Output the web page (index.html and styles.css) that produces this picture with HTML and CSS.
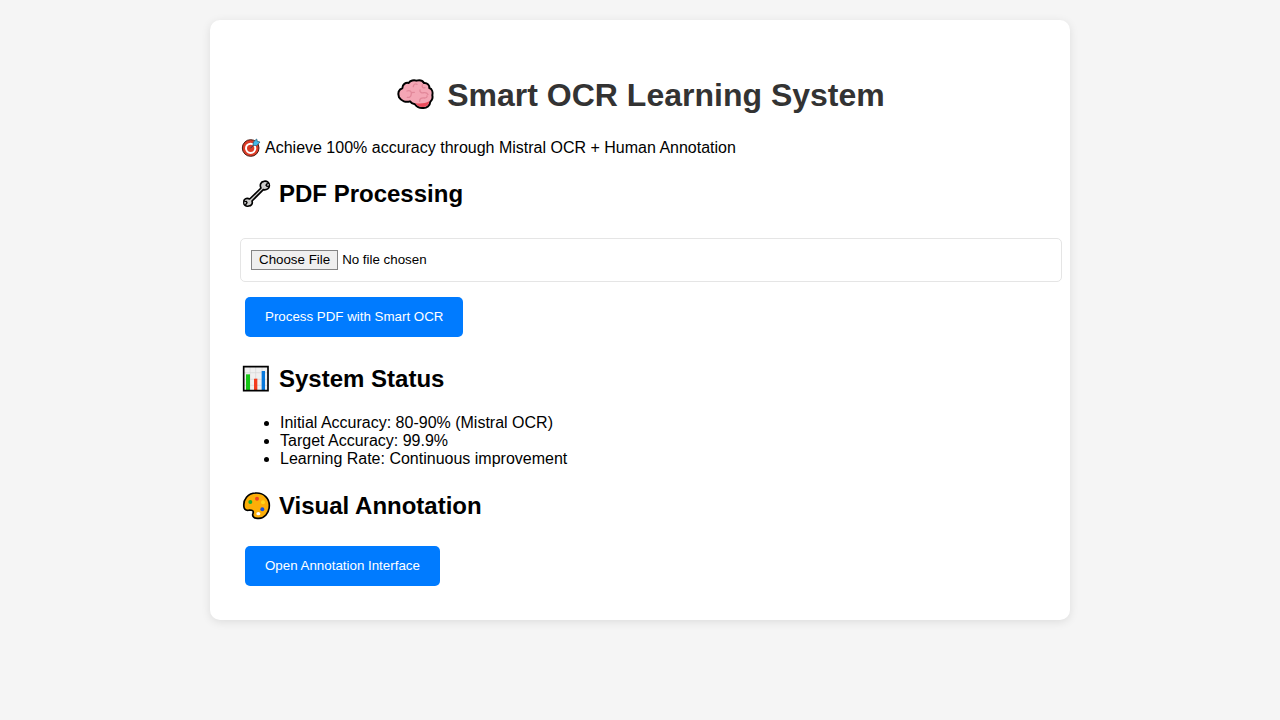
FILE: index.html
```html
<!DOCTYPE html>
<html lang="en">
<head>
<meta charset="utf-8">
<meta name="viewport" content="width=device-width, initial-scale=1">
<title>Smart OCR Learning System</title>
<link rel="stylesheet" href="styles.css">
</head>
<body class="page">
<main class="container">
  <h1 class="title">
    <svg class="icon-title" viewBox="18 21 126 108" aria-hidden="true">
      <path d="M30 82C25 70 29 58 40 55C40 43 50 37 59 39C64 31 75 29 82 32C92 29 101 32 105 39C115 38 122 46 121 54C130 57 132 68 130 76C132 84 129 91 124 95C123 107 113 115 102 114C91 115 84 111 78 103C70 102 66 98 63 94C51 98 37 94 30 82Z" fill="#f4a6b5" stroke="#000" stroke-width="6" stroke-linejoin="round"/>
      <path d="M79 99C94 103 108 100 121 94C120 105 110 112 101 111C91 111 84 107 79 99Z" fill="#ea4c5c"/>
      <path d="M54 63C64 59 70 66 66 76C65 81 60 83 55 82M67 68L76 67M73 50C73 43 79 40 84 43M100 44C98 52 103 55 108 53M93 60C91 66 98 70 105 68C111 67 115 70 117 74M92 94C91 86 98 82 107 84C112 84 115 81 114 78" fill="none" stroke="#e2889a" stroke-width="4" stroke-linecap="round"/>
    </svg>
    <span>Smart OCR Learning System</span>
  </h1>
  <p class="intro">
    <svg class="icon-text" viewBox="12 14 63 60" aria-hidden="true">
      <circle cx="44" cy="44" r="25" fill="#dc3c26" stroke="#4a1d16" stroke-width="3"/>
      <circle cx="44" cy="45" r="14" fill="#dc3c26" stroke="#fff" stroke-width="6"/>
      <path d="M43 45L57 31" stroke="#173f54" stroke-width="3"/>
      <path d="M51 36L52 26L62 17L64 24L72 26L62 37Z" fill="#42b8e8" stroke="#19516c" stroke-width="2"/>
    </svg>
    <span>Achieve 100% accuracy through Mistral OCR + Human Annotation</span>
  </p>

  <section>
    <h2 class="heading">
      <svg class="icon-heading" viewBox="12 12 96 96" aria-hidden="true">
        <path d="M75 42C70 32 75 23 84 22C92 19 100 26 100 34C101 43 92 49 82 47L48 81C51 89 46 96 38 96C30 99 22 92 24 84C22 76 31 70 41 75Z" fill="#d0cfce" stroke="#000" stroke-width="5" stroke-linejoin="round"/>
        <path d="M99 29L92 30L90 34L93 37L99 36M25 83L31 82L33 86L31 90L26 91" fill="#fff" stroke="#000" stroke-width="4" stroke-linejoin="round"/>
      </svg>
      <span>PDF Processing</span>
    </h2>
    <input class="file-input" type="file" accept=".pdf" aria-label="PDF file">
    <button class="button button-process" type="button">Process PDF with Smart OCR</button>
  </section>

  <section>
    <h2 class="heading">
      <svg class="icon-heading" viewBox="12 9 96 96" aria-hidden="true">
        <path d="M23 20H96V92H23Z" fill="#f0f0f0"/>
        <path d="M42 20V92M59 20V92M78 20V92M23 38H96M23 58H96M23 76H96" stroke="#d7d7d7" stroke-width="2"/>
        <path d="M30 43H42V91H30Z" fill="#16c616"/>
        <path d="M54 56H64V91H54Z" fill="#f33b1d"/>
        <path d="M77 33H87V91H77Z" fill="#0879dc"/>
        <path d="M23 20H96V92H23Z" fill="none" stroke="#000" stroke-width="5"/>
      </svg>
      <span>System Status</span>
    </h2>
    <ul class="status">
      <li>Initial Accuracy: 80-90% (Mistral OCR)</li>
      <li>Target Accuracy: 99.9%</li>
      <li>Learning Rate: Continuous improvement</li>
    </ul>
  </section>

  <section>
    <h2 class="heading">
      <svg class="icon-heading" viewBox="12 12 96 96" aria-hidden="true">
        <path d="M24 64C20 40 36 21 60 21C84 20 100 38 100 58C100 82 84 98 67 97C55 98 47 91 51 82C54 74 48 72 41 72C33 75 26 72 24 64Z" fill="#fcae08" stroke="#000" stroke-width="5" stroke-linejoin="round"/>
        <circle cx="43" cy="48" r="6" fill="#19ad2c"/>
        <circle cx="63" cy="38" r="6" fill="#ef4423"/>
        <circle cx="81" cy="49" r="6" fill="#ffd51c"/>
        <circle cx="79" cy="70" r="6" fill="#164fe0"/>
        <ellipse cx="67" cy="83" rx="6" ry="5" fill="#fff"/>
      </svg>
      <span>Visual Annotation</span>
    </h2>
    <button class="button button-annotate" type="button">Open Annotation Interface</button>
  </section>
</main>
</body>
</html>
```
FILE: styles.css
```css
.page {
  box-sizing: border-box;
  min-height: 100vh;
  margin: 0;
  padding: 20px;
  background: #f5f5f5;
  color: #000;
  font-family: "Liberation Sans", Arial, sans-serif;
  font-size: 16px;
  line-height: 18px;
}

.container {
  display: flow-root;
  max-width: 800px;
  margin: 0 auto;
  padding: 30px;
  background: #fff;
  border-radius: 10px;
  box-shadow: 0 2px 10px rgba(0, 0, 0, 0.1);
}

.title {
  display: flex;
  align-items: center;
  justify-content: center;
  gap: 10px;
  margin: 22px 0 21px;
  color: #333;
  font-size: 32px;
  line-height: 46px;
}

.intro {
  display: flex;
  align-items: center;
  gap: 4px;
  margin: 0 0 21px;
}

.heading {
  display: flex;
  align-items: center;
  gap: 7px;
  margin: 21px 0 19px;
  font-size: 24px;
  line-height: 32px;
}

.icon-title {
  flex: none;
  width: 42px;
  height: 36px;
}

.icon-text {
  flex: none;
  width: 21px;
  height: 20px;
  margin: -1px 0;
}

.icon-heading {
  flex: none;
  width: 32px;
  height: 32px;
}

.file-input {
  display: block;
  box-sizing: content-box;
  width: 100%;
  margin: 28px 0 10px;
  padding: 10px;
  border: 1px solid #e5e5e5;
  border-radius: 5px;
  font-family: inherit;
  line-height: 22px;
}

.file-input::file-selector-button {
  height: 20px;
  margin: 0 4px 0 0;
  padding: 0 7px;
  border: 1px solid #858585;
  border-radius: 0;
  background: #efefef;
  color: #000;
  font-family: inherit;
  line-height: 18px;
}

.button {
  display: block;
  padding: 12px 20px;
  border: 0;
  border-radius: 5px;
  background: #007bff;
  color: #fff;
  font-family: inherit;
  line-height: 16px;
  cursor: pointer;
}

.button-process {
  margin: 15px 5px 26px;
}

.button-annotate {
  margin: 24px 5px 4px;
}

.status {
  margin: 19px 0 22px;
  padding-left: 40px;
}
```
